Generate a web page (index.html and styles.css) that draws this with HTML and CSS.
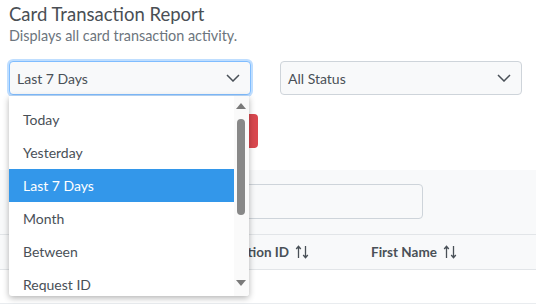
FILE: index.html
```html
<!DOCTYPE html>
<html lang="en">
<head>
  <meta charset="UTF-8" />
  <title>Card Transaction Report</title>
  <link rel="stylesheet" href="styles.css">
</head>
<body>
  <div class="page">
    <h1>Card Transaction Report</h1>
    <p class="sub">Displays all card transaction activity.</p>

    <div class="filters">
      <div class="select focus">
        <span>Last 7 Days</span>
        <svg class="chev" width="14" height="8" viewBox="0 0 14 8"><polyline points="1,1 7,7 13,1" fill="none" stroke="#495057" stroke-width="1.5"/></svg>
      </div>
      <div class="select">
        <span>All Status</span>
        <svg class="chev" width="14" height="8" viewBox="0 0 14 8"><polyline points="1,1 7,7 13,1" fill="none" stroke="#495057" stroke-width="1.5"/></svg>
      </div>

      <div class="menu">
        <ul class="options">
          <li>Today</li>
          <li>Yesterday</li>
          <li class="active">Last 7 Days</li>
          <li>Month</li>
          <li>Between</li>
          <li>Request ID</li>
        </ul>
        <div class="scroll">
          <span class="arrow up"></span>
          <span class="thumb"></span>
          <span class="arrow down"></span>
        </div>
      </div>
    </div>

    <div class="actions">
      <button class="btn-search">Search</button>
    </div>
  </div>

  <div class="panel">
    <div class="search-row">
      <input class="search" type="text" />
    </div>
    <div class="thead">
      <div class="th"></div>
      <div class="th">Transaction ID <svg class="sort" width="14" height="14" viewBox="0 0 14 14"><path d="M3.5 13V1.5M1.2 4l2.3-2.7 2.3 2.7M10.5 1v11.5M8.2 10l2.3 2.7 2.3-2.7" fill="none" stroke="#495057" stroke-width="1.3"/></svg></div>
      <div class="th">First Name <svg class="sort" width="14" height="14" viewBox="0 0 14 14"><path d="M3.5 13V1.5M1.2 4l2.3-2.7 2.3 2.7M10.5 1v11.5M8.2 10l2.3 2.7 2.3-2.7" fill="none" stroke="#495057" stroke-width="1.3"/></svg></div>
    </div>
    <div class="tbody"></div>
  </div>
</body>
</html>
```

FILE: styles.css
```css
body {
  margin: 0;
  font-family: Lato, "Open Sans", sans-serif;
  color: #495057;
  background-color: #fff;
}
.page {
  padding: 0 9px;
}
h1 {
  margin: 0;
  padding-top: 3px;
  font-size: 18.5px;
  font-weight: 400;
  line-height: 22px;
  color: #4a4f55;
}
.sub {
  margin: 2px 0 0;
  font-size: 14.4px;
  line-height: 17px;
  color: #6c757d;
}
.filters {
  position: relative;
  display: flex;
  gap: 29px;
  margin-top: 17px;
}
.select {
  box-sizing: border-box;
  width: 242px;
  height: 34px;
  padding: 0 10px 0 7px;
  display: flex;
  align-items: center;
  justify-content: space-between;
  font-size: 14px;
  color: #495057;
  background-color: #f8f9fa;
  border: 1px solid #ced4da;
  border-radius: 4px;
}
.select.focus {
  border-color: #80bdff;
  box-shadow: 0 0 0 2px rgba(0, 123, 255, 0.25);
}
.menu {
  position: absolute;
  top: 35px;
  left: 0;
  width: 240px;
  height: 200px;
  display: flex;
  background-color: #fff;
  box-shadow: 0 2px 6px rgba(0, 0, 0, 0.3);
  border-radius: 0 0 3px 3px;
  z-index: 5;
  overflow: hidden;
}
.options {
  flex: 1;
  list-style: none;
  margin: 0;
  padding: 7px 0 0;
}
.options li {
  height: 33px;
  line-height: 33px;
  padding-left: 14px;
  font-size: 14px;
  color: #495057;
}
.options li.active {
  background-color: #3397ea;
  color: #fff;
}
.scroll {
  position: relative;
  width: 15px;
  background-color: #fafafa;
}
.thumb {
  position: absolute;
  left: 3px;
  top: 23px;
  width: 8px;
  height: 96px;
  border-radius: 4px;
  background-color: #888;
}
.arrow {
  position: absolute;
  left: 2px;
  width: 0;
  height: 0;
  border-left: 5px solid transparent;
  border-right: 5px solid transparent;
}
.arrow.up {
  top: 7px;
  border-bottom: 6px solid #7a7a7a;
}
.arrow.down {
  top: 184px;
  border-top: 6px solid #7a7a7a;
}
.actions {
  margin-top: 19px;
  height: 56px;
}
.btn-search {
  height: 34px;
  width: 110px;
  margin-left: 139px;
  border: none;
  border-radius: 4px;
  background-color: #d9484f;
  color: #fff;
  font-size: 14px;
}
.panel {
  background-color: #f8f9fa;
}
.search-row {
  padding: 14px 0 15px 122px;
}
.search {
  box-sizing: border-box;
  display: block;
  width: 301px;
  height: 35px;
  border: 1px solid #ced4da;
  border-radius: 4px;
  background-color: #f8f9fa;
}
.thead {
  display: grid;
  grid-template-columns: 180px 191px 1fr;
  height: 34px;
  border-top: 1px solid #e2e5e8;
  border-bottom: 1px solid #e2e5e8;
  align-items: center;
}
.th {
  padding-left: 12px;
  font-size: 13.5px;
  font-weight: 700;
  color: #495057;
  display: flex;
  align-items: center;
  gap: 6px;
}
.th:nth-child(2) {
  padding-left: 22px;
}
.th:nth-child(3) {
  padding-left: 0;
}
.tbody {
  height: 33px;
  background-color: #fff;
  border-bottom: 1px solid #e9ecef;
}
```
